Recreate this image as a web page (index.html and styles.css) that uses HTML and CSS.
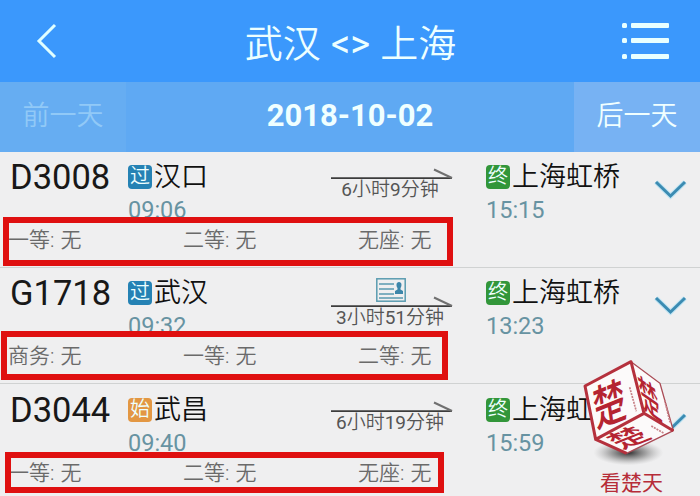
FILE: index.html
```
<!DOCTYPE html>
<html lang="zh-CN">
<head>
    <meta charset="UTF-8">
    <meta name="viewport" content="width=device-width, initial-scale=1.0">
    <title>武汉 - 上海</title>
    <link rel="stylesheet" href="styles.css">
</head>
<body>
    <header class="header">
        <svg class="back" width="22" height="36" viewBox="0 0 22 36"><path d="M19 2L3 18l16 16"/></svg>
        <h1>武汉 <span>&lt;&gt;</span> 上海</h1>
        <svg class="menu" width="48" height="38" viewBox="0 0 48 38">
            <rect x="0" y="1" width="5" height="5" rx="1.5"/><rect x="9" y="1" width="38" height="5" rx="1"/>
            <rect x="0" y="16" width="5" height="5" rx="1.5"/><rect x="9" y="16" width="38" height="5" rx="1"/>
            <rect x="0" y="32" width="5" height="5" rx="1.5"/><rect x="9" y="32" width="38" height="5" rx="1"/>
        </svg>
    </header>
    <nav class="date-bar">
        <div class="day prev">前一天</div>
        <div class="date">2018-10-02</div>
        <div class="day next">后一天</div>
    </nav>

    <main class="trains">
        <section class="train">
            <div class="info">
                <div class="code">D3008</div>
                <div class="stop">
                    <div class="station"><span class="tag pass">过</span>汉口</div>
                    <div class="time">09:06</div>
                </div>
                <div class="duration">
                    <svg class="arrow" width="122" height="12" viewBox="0 0 122 12"><path class="line" d="M0 10.2h121"/><path class="barb" d="M103 1.5l18 8.5"/></svg>
                    <div class="length"><b>6</b>小时<b>9</b>分钟</div>
                </div>
                <div class="stop">
                    <div class="station"><span class="tag end">终</span>上海虹桥</div>
                    <div class="time">15:15</div>
                </div>
                <svg class="chevron" width="33" height="21" viewBox="0 0 33 21"><path class="glow" d="M2 3l14.5 14L31 3"/><path d="M2 3l14.5 14L31 3"/></svg>
            </div>
            <div class="seats"><span>一等: 无</span><span>二等: 无</span><span>无座: 无</span></div>
            <div class="mark mark-1"></div>
        </section>

        <section class="train">
            <div class="info">
                <div class="code">G1718</div>
                <div class="stop">
                    <div class="station"><span class="tag pass">过</span>武汉</div>
                    <div class="time">09:32</div>
                </div>
                <div class="duration with-card">
                    <svg class="card" width="30" height="24" viewBox="0 0 30 24">
                        <rect x=".8" y=".8" width="28.4" height="22.4"/>
                        <path d="M3 6h15M3 11h15M3 16h15M3 20h24"/>
                        <path class="person" d="M23 4c3 0 3 4 1.5 6v1.5l2.5 1.5v3h-8v-3l2.5-1.5V10C20 8 20 4 23 4z"/>
                    </svg>
                    <svg class="arrow" width="122" height="12" viewBox="0 0 122 12"><path class="line" d="M0 10.2h121"/><path class="barb" d="M103 1.5l18 8.5"/></svg>
                    <div class="length"><b>3</b>小时<b>51</b>分钟</div>
                </div>
                <div class="stop">
                    <div class="station"><span class="tag end">终</span>上海虹桥</div>
                    <div class="time">13:23</div>
                </div>
                <svg class="chevron" width="33" height="21" viewBox="0 0 33 21"><path class="glow" d="M2 3l14.5 14L31 3"/><path d="M2 3l14.5 14L31 3"/></svg>
            </div>
            <div class="seats"><span>商务: 无</span><span>一等: 无</span><span>二等: 无</span></div>
            <div class="mark mark-2"></div>
        </section>

        <section class="train">
            <div class="info">
                <div class="code">D3044</div>
                <div class="stop">
                    <div class="station"><span class="tag start">始</span>武昌</div>
                    <div class="time">09:40</div>
                </div>
                <div class="duration">
                    <svg class="arrow" width="122" height="12" viewBox="0 0 122 12"><path class="line" d="M0 10.2h121"/><path class="barb" d="M103 1.5l18 8.5"/></svg>
                    <div class="length"><b>6</b>小时<b>19</b>分钟</div>
                </div>
                <div class="stop">
                    <div class="station"><span class="tag end">终</span>上海虹桥</div>
                    <div class="time">15:59</div>
                </div>
                <svg class="chevron" width="33" height="21" viewBox="0 0 33 21"><path class="glow" d="M2 3l14.5 14L31 3"/><path d="M2 3l14.5 14L31 3"/></svg>
            </div>
            <div class="seats"><span>一等: 无</span><span>二等: 无</span><span>无座: 无</span></div>
            <div class="mark mark-3"></div>
        </section>
    </main>

    <!-- 看楚天 logo -->
    <div class="logo">
        <svg width="120" height="118" viewBox="0 0 360 354">
            <defs>
                <radialGradient id="shadow">
                    <stop offset="0" stop-color="#222" stop-opacity=".95"/>
                    <stop offset=".5" stop-color="#555" stop-opacity=".5"/>
                    <stop offset="1" stop-color="#999" stop-opacity="0"/>
                </radialGradient>
            </defs>
            <ellipse cx="175" cy="308" rx="105" ry="38" fill="url(#shadow)"/>
            <path class="face" d="M183 35L45 108l32 160 93 42 140-68-40-142z"/>
            <path class="thin" d="M183 35l87 65 40 142-140 68"/>
            <path class="edge" d="M222 190L183 35 45 108l32 160 145-78 88 52M77 268l93 42"/>
            <text class="chu" transform="matrix(.95 -.38 .2 1.4 78 233)">楚</text>
            <text class="chu" transform="matrix(.6 .42 .27 1.25 219 172)">楚</text>
            <text class="chu" transform="matrix(.95 -.38 .7 .46 154 299)">楚</text>
            <path class="small" d="M179 112l20 72M284 151l16 66M244 228l38 22"/>
        </svg>
        <div class="logo-name">看楚天</div>
    </div>
</body>
</html>
```

FILE: styles.css
```
* {
    box-sizing: border-box;
}
body {
    font-family: Roboto, "Noto Sans CJK SC", sans-serif;
    background-color: #efeff0;
    margin: 0;
    width: 700px;
    height: 496px;
    position: relative;
    overflow: hidden;
}
svg {
    display: block;
    fill: none;
}
.header {
    height: 82px;
    padding: 0 30px 0 36px;
    display: flex;
    align-items: center;
    justify-content: space-between;
    background: #3b98fc;
    color: #edffff;
}
.header h1 {
    margin: 5px 0 0 21px;
    font-size: 38px;
    line-height: 48px;
    font-weight: 350;
    word-spacing: 1px;
    white-space: nowrap;
}
.header h1 span {
    font-weight: 400;
}
.back {
    stroke: #e0ffff;
    stroke-width: 3;
}
.menu {
    fill: #e8ffff;
}
.date-bar {
    height: 70px;
    display: grid;
    grid-template-columns: 126px 1fr 126px;
    line-height: 68px;
    text-align: center;
    background: #5fa9f3;
    color: #f0ffff;
}
.day {
    font-size: 27px;
    font-weight: 350;
}
.prev {
    background: #66adf2;
    color: #91c9f7;
}
.next {
    background: #77b2f3;
}
.date {
    font-size: 31px;
    font-weight: bold;
}
.train {
    position: relative;
    height: 116px;
    border-bottom: 1px solid #d0d2d2;
}
.train:last-child {
    padding-top: 1px;
}
.info {
    height: 73px;
    display: grid;
    grid-template-columns: 118px 203px 122px 1fr 33px;
    padding: 0 13px 0 10px;
}
.code {
    padding-top: 5px;
    font-size: 34.5px;
    line-height: 40px;
    color: #181818;
}
.station {
    display: flex;
    align-items: center;
    gap: 2px;
    height: 34px;
    margin-top: 8px;
    font-size: 27px;
    line-height: 34px;
    font-weight: 350;
    color: #111;
}
.tag {
    width: 24px;
    height: 24px;
    border-radius: 4px;
    font-size: 20px;
    line-height: 23px;
    text-align: center;
    color: #eff;
}
.pass {
    background: #2582b4;
}
.end {
    background: #32963a;
}
.start {
    background: #e39743;
}
.time {
    margin-top: 2px;
    font-size: 23.5px;
    line-height: 28px;
    color: #6793a2;
}
.stop + .duration {
    padding-top: 16px;
    font-size: 19px;
    line-height: 20px;
    text-align: center;
    white-space: nowrap;
    color: #555;
}
.stop + .with-card {
    padding-top: 10px;
}
.length {
    padding-right: 4px;
    font-weight: 350;
}
.length b {
    font-weight: 400;
}
.card {
    margin: 0 0 -6px 45px;
    stroke: #599bb0;
    stroke-width: 1.5;
}
.card .person {
    fill: #3d86aa;
    stroke: none;
}
.duration + .stop {
    padding-left: 33px;
}
.line {
    stroke: #3c3c3c;
    stroke-width: 1.8;
}
.barb {
    stroke: #707070;
    stroke-width: 2;
}
.chevron {
    margin-top: 27px;
    stroke: #3b8bb2;
    stroke-width: 3;
}
.chevron .glow {
    stroke: #bfe4f3;
    stroke-width: 5;
}
.seats {
    display: grid;
    grid-template-columns: 175px 175px 1fr;
    padding-left: 8px;
    font-size: 21px;
    line-height: 30px;
    font-weight: 350;
    word-spacing: 1px;
    color: #6a6a6a;
}
/* red frames drawn over the seat rows */
.mark {
    position: absolute;
    border: 6px solid #df1010;
}
.mark-1 {
    left: 3px;
    top: 65px;
    width: 450px;
    height: 49px;
}
.mark-2 {
    left: 1px;
    top: 63px;
    width: 447px;
    height: 49px;
}
.mark-3 {
    left: 5px;
    top: 68px;
    width: 439px;
    height: 41px;
}
.logo {
    position: absolute;
    left: 570px;
    top: 350px;
    width: 120px;
}
.face {
    fill: #fcfafa;
}
.edge {
    stroke: #b5313d;
    stroke-width: 9;
    stroke-linejoin: round;
}
.thin {
    stroke: #aa4b55;
    stroke-width: 4;
}
.small {
    stroke: #c78187;
    stroke-width: 5;
    stroke-dasharray: 6 3;
}
.chu {
    font-family: "Noto Sans CJK SC", sans-serif;
    font-size: 100px;
    font-weight: 500;
    fill: #b52431;
}
.logo-name {
    margin-top: 1px;
    padding-left: 3px;
    font-size: 21px;
    line-height: 28px;
    text-align: center;
    color: #b62c38;
}
```
